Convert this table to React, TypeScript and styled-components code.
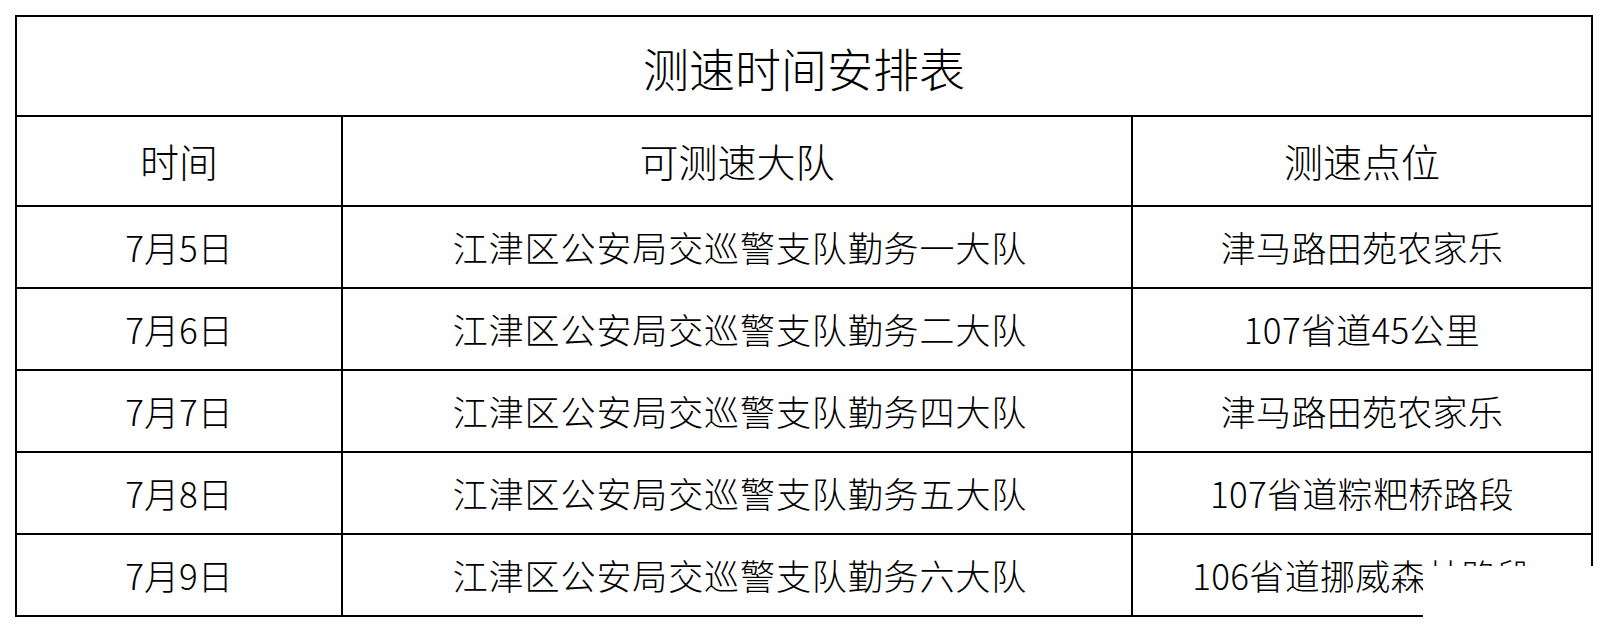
import React from "react";
import styled, { createGlobalStyle } from "styled-components";

const GlobalStyle = createGlobalStyle`
  html, body {
    margin: 0;
    padding: 0;
    background: #ffffff;
  }
  body {
    padding: 15px;
    font-family: "Noto Sans CJK SC", "Liberation Sans", sans-serif;
    color: #000000;
  }
`;

const Sheet = styled.div`
  position: relative;
  display: grid;
  grid-template-columns: 326px 790px 460px;
  grid-template-rows: 100px 90px repeat(5, 82px);
  width: 1578px;
  box-sizing: border-box;
  border-top: 2px solid #000;
  border-left: 2px solid #000;
`;

const Cell = styled.div<{ $size: number; $span?: boolean; $track?: number; $shift?: number }>`
  grid-column: ${(p) => (p.$span ? "1 / -1" : "auto")};
  display: flex;
  align-items: center;
  justify-content: center;
  box-sizing: border-box;
  border-right: 2px solid #000;
  border-bottom: 2px solid #000;
  font-size: ${(p) => p.$size}px;
  font-weight: 300;
  letter-spacing: ${(p) => p.$track ?? 0}px;
  line-height: 1;
  padding-top: ${(p) => (p.$span ? 4 : 0)}px;
  padding-bottom: 2px;
  padding-left: ${(p) => p.$shift ?? 0}px;
  white-space: nowrap;
  overflow: visible;
`;

const Mask = styled.div`
  position: absolute;
  left: 1406px;
  top: 549px;
  right: -15px;
  bottom: -15px;
  background: #ffffff;
`;

const rows: [string, string, string][] = [
  ["7月5日", "江津区公安局交巡警支队勤务一大队", "津马路田苑农家乐"],
  ["7月6日", "江津区公安局交巡警支队勤务二大队", "107省道45公里"],
  ["7月7日", "江津区公安局交巡警支队勤务四大队", "津马路田苑农家乐"],
  ["7月8日", "江津区公安局交巡警支队勤务五大队", "107省道粽粑桥路段"],
  ["7月9日", "江津区公安局交巡警支队勤务六大队", "106省道挪威森林路段"],
];

export default function App() {
  return (
    <>
      <GlobalStyle />
      <Sheet>
        <Cell $size={46} $span>
          测速时间安排表
        </Cell>
        <Cell $size={39}>时间</Cell>
        <Cell $size={39}>可测速大队</Cell>
        <Cell $size={39}>测速点位</Cell>
        {rows.map((r) => (
          <React.Fragment key={r[0]}>
            <Cell $size={35} $track={0}>{r[0]}</Cell>
            <Cell $size={35} $track={0.9} $shift={6}>{r[1]}</Cell>
            <Cell $size={35} $track={0.3}>{r[2]}</Cell>
          </React.Fragment>
        ))}
        <Mask />
      </Sheet>
    </>
  );
}
